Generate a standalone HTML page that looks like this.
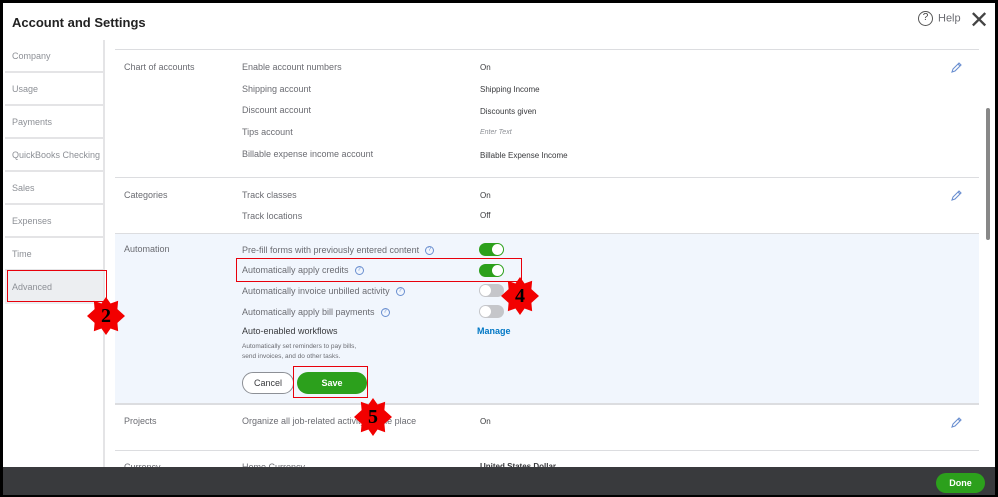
<!DOCTYPE html>
<html><head><style>
*{box-sizing:border-box;margin:0;padding:0}
body{width:998px;height:497px;overflow:hidden;background:#fff;font-family:"Liberation Sans",sans-serif;position:relative;color:#393a3d}
.frame{position:absolute;left:0;top:0;width:998px;height:497px;border:3px solid #000;border-bottom-width:2px}
.title{position:absolute;left:12px;top:15px;font-size:13px;font-weight:bold;color:#222}
.help{position:absolute;left:918px;top:11px;font-size:11px;color:#6b6c72}
.help span.q{display:inline-block;width:15px;height:15px;border:1.5px solid #555;border-radius:50%;text-align:center;font-size:10px;line-height:12px;color:#444;margin-right:5px;vertical-align:middle}
.x{position:absolute;left:969px;top:6px;font-size:24px;color:#444;font-weight:300}
.side{position:absolute;left:5px;top:40px;width:100px;border-right:2px solid #e4e4e6;height:427px}
.side div{height:33px;border-bottom:2px solid #e4e4e6;font-size:9px;color:#8d9096;padding:11px 0 0 7px}
.t{position:absolute;font-size:9px;color:#6b6c72;white-space:nowrap}
.v{position:absolute;font-size:8px;color:#393a3d;white-space:nowrap;left:480px}
.hl{position:absolute;left:115px;width:864px;height:1px;background:#dcdde0}
.tog{position:absolute;left:479px;width:25px;height:13px;border-radius:7px;background:#2ca01c}
.tog::after{content:"";position:absolute;right:1px;top:1px;width:11px;height:11px;border-radius:50%;background:#fff}
.tog.off{background:#c5c6ca}.tog.off::after{left:1px;right:auto}
.qi{display:inline-block;width:9px;height:9px;border:1px solid #6a8fd0;border-radius:50%;font-size:6px;line-height:7px;text-align:center;color:#6a8fd0;margin-left:6px;vertical-align:middle}
.red{position:absolute;border:1.5px solid #e8000b}
.star{position:absolute;width:38px;height:38px;background:#f20000;clip-path:polygon(50% 0,62% 17%,82% 10%,80% 32%,100% 50%,80% 68%,82% 90%,62% 83%,50% 100%,38% 83%,18% 90%,20% 68%,0 50%,20% 32%,18% 10%,38% 17%);font-family:"Liberation Serif",serif;font-weight:bold;font-size:20px;color:#000;text-align:center;line-height:38px}
.pen{position:absolute;left:950px;width:12px;height:12px}
</style></head><body>
<div class="title">Account and Settings</div>
<div class="help"><span class="q">?</span>Help</div>
<div class="x">✕</div>
<div class="side">
<div>Company</div><div>Usage</div><div>Payments</div><div>QuickBooks Checking</div><div>Sales</div><div>Expenses</div><div>Time</div><div style="background:#eceef1;border:none">Advanced</div>
</div>
<div class="hl" style="top:49px"></div>
<div class="t" style="left:124px;top:62px">Chart of accounts</div>
<div class="t" style="left:242px;top:62px">Enable account numbers</div><div class="v" style="top:63px">On</div>
<div class="t" style="left:242px;top:84px">Shipping account</div><div class="v" style="top:85px">Shipping Income</div>
<div class="t" style="left:242px;top:105px">Discount account</div><div class="v" style="top:107px">Discounts given</div>
<div class="t" style="left:242px;top:127px">Tips account</div><div class="v" style="top:129px;color:#8d9096;font-style:italic;font-size:7px">Enter Text</div>
<div class="t" style="left:242px;top:149px">Billable expense income account</div><div class="v" style="top:151px">Billable Expense Income</div>
<svg class="pen" style="top:62px" viewBox="0 0 12 12"><path d="M2 10l1-3 6-6 2 2-6 6z M8 2l2 2" fill="none" stroke="#6a8fd0" stroke-width="1.1"/></svg>
<div class="hl" style="top:177px"></div>
<div class="t" style="left:124px;top:190px">Categories</div>
<div class="t" style="left:242px;top:190px">Track classes</div><div class="v" style="top:191px">On</div>
<div class="t" style="left:242px;top:211px">Track locations</div><div class="v" style="top:211px">Off</div>
<svg class="pen" style="top:190px" viewBox="0 0 12 12"><path d="M2 10l1-3 6-6 2 2-6 6z M8 2l2 2" fill="none" stroke="#6a8fd0" stroke-width="1.1"/></svg>
<div style="position:absolute;left:115px;top:233px;width:864px;height:171px;background:#f1f6fd;border-top:1px solid #dcdde0;border-bottom:1px solid #dcdde0"></div>
<div class="t" style="left:124px;top:244px">Automation</div>
<div class="t" style="left:242px;top:245px">Pre-fill forms with previously entered content<span class="qi">?</span></div>
<div class="t" style="left:242px;top:265px">Automatically apply credits<span class="qi">?</span></div>
<div class="t" style="left:242px;top:286px">Automatically invoice unbilled activity<span class="qi">?</span></div>
<div class="t" style="left:242px;top:307px">Automatically apply bill payments<span class="qi">?</span></div>
<div class="tog" style="top:243px"></div><div class="tog" style="top:264px"></div>
<div class="tog off" style="top:284px"></div><div class="tog off" style="top:305px"></div>
<div class="t" style="left:242px;top:326px;color:#393a3d">Auto-enabled workflows</div>
<div class="t" style="left:477px;top:326px;color:#0077c5;font-weight:bold">Manage</div>
<div class="t" style="left:242px;top:342px;font-size:6.5px;line-height:10px">Automatically set reminders to pay bills,<br>send invoices, and do other tasks.</div>
<div style="position:absolute;left:242px;top:372px;width:52px;height:22px;border:1px solid #8d9096;border-radius:11px;background:#fff;font-size:9px;text-align:center;line-height:20px;color:#393a3d">Cancel</div>
<div style="position:absolute;left:297px;top:372px;width:70px;height:22px;border-radius:11px;background:#2ca01c;font-size:9px;font-weight:bold;text-align:center;line-height:22px;color:#fff">Save</div>
<div class="hl" style="top:404px"></div>
<div class="t" style="left:124px;top:416px">Projects</div>
<div class="t" style="left:242px;top:416px">Organize all job-related activity in one place</div><div class="v" style="top:417px">On</div>
<svg class="pen" style="top:417px" viewBox="0 0 12 12"><path d="M2 10l1-3 6-6 2 2-6 6z M8 2l2 2" fill="none" stroke="#6a8fd0" stroke-width="1.1"/></svg>
<div class="hl" style="top:450px"></div>
<div class="t" style="left:124px;top:462px">Currency</div>
<div class="t" style="left:242px;top:462px">Home Currency</div><div class="v" style="top:462px;font-weight:bold">United States Dollar</div>
<div style="position:absolute;left:986px;top:108px;width:4px;height:132px;background:#888;border-radius:2px"></div>
<div style="position:absolute;left:0;top:467px;width:998px;height:30px;background:#393a3d"></div>
<div style="position:absolute;left:936px;top:473px;width:49px;height:20px;border-radius:10px;background:#2ca01c;color:#fff;font-size:9px;font-weight:bold;text-align:center;line-height:20px">Done</div>
<div class="red" style="left:7px;top:270px;width:100px;height:32px"></div>
<div class="red" style="left:236px;top:258px;width:286px;height:24px"></div>
<div class="red" style="left:293px;top:366px;width:75px;height:32px"></div>
<div class="star" style="left:87px;top:297px">2</div>
<div class="star" style="left:501px;top:277px">4</div>
<div class="star" style="left:354px;top:398px">5</div>
<div class="frame"></div>
</body></html>
